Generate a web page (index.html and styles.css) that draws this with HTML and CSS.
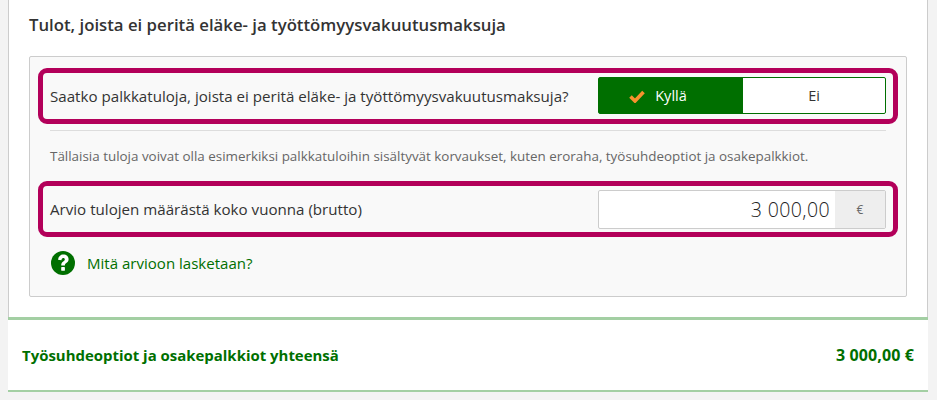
FILE: index.html
```html
<!DOCTYPE html>
<html lang="fi">
<head>
    <meta charset="UTF-8">
    <meta name="viewport" content="width=device-width, initial-scale=1.0">
    <title>Työsuhdeoptiot ja osakepalkkiot</title>
    <link rel="stylesheet" href="styles.css">
</head>
<body>
    <div class="panel">
        <h2 class="panel-title">Tulot, joista ei peritä eläke- ja työttömyysvakuutusmaksuja</h2>

        <div class="question-box">
            <div class="highlight-row">
                <span class="row-label">Saatko palkkatuloja, joista ei peritä eläke- ja työttömyysvakuutusmaksuja?</span>
                <div class="toggle">
                    <button class="toggle-btn active">
                        <svg class="check-icon" viewBox="0 0 16 13" width="16" height="13">
                            <path d="M1.5 6.5 L6 11 L14.5 2" fill="none" stroke="#f7922e" stroke-width="3.6"/>
                        </svg>Kyllä
                    </button>
                    <button class="toggle-btn">Ei</button>
                </div>
            </div>

            <hr class="divider">
            <p class="help-text">Tällaisia tuloja voivat olla esimerkiksi palkkatuloihin sisältyvät korvaukset, kuten eroraha, työsuhdeoptiot ja osakepalkkiot.</p>

            <div class="highlight-row">
                <span class="row-label">Arvio tulojen määrästä koko vuonna (brutto)</span>
                <div class="amount-input">
                    <span class="amount-value">3 000,00</span>
                    <span class="amount-unit">€</span>
                </div>
            </div>

            <a href="#" class="help-link">
                <svg class="help-icon" viewBox="0 0 24 24" width="24" height="24">
                    <circle cx="12" cy="12" r="12" fill="#006f00"/>
                    <path d="M7 8.8 C7.4 5.6 9.4 3.6 12.4 3.6 C15.4 3.6 17.6 5.6 17.6 8.3 C17.6 10.4 16.4 11.4 15 12.3 C14.1 12.9 13.9 13.3 13.9 14.6 L10.2 14.6 C10.2 12.5 10.7 11.4 12.2 10.4 C13.3 9.7 13.8 9.3 13.8 8.5 C13.8 7.7 13.2 7.1 12.3 7.1 C11.3 7.1 10.7 7.8 10.4 9.2 Z" fill="#fff"/>
                    <rect x="10.2" y="16" width="3.7" height="3.7" rx="0.4" fill="#fff"/>
                </svg>
                Mitä arvioon lasketaan?
            </a>
        </div>
    </div>

    <div class="total-row">
        <span>Työsuhdeoptiot ja osakepalkkiot yhteensä</span>
        <span class="total-value">3 000,00 €</span>
    </div>
</body>
</html>
```

FILE: styles.css
```css
body {
    font-family: 'Open Sans', 'Noto Sans', sans-serif;
    margin: 0;
    padding: 0 9px 8px 8px;
    background-color: #f3f3f3;
    color: #333;
    font-size: 14px;
}
.panel {
    background-color: white;
    border-left: 1px solid #ccc;
    border-right: 1px solid #ccc;
    padding: 13px 20px 20px 20px;
}
.panel-title {
    font-size: 16.75px;
    font-weight: 600;
    line-height: 24px;
    margin: 0 0 19px 0;
    color: #333;
}
.question-box {
    background-color: #f9f9f9;
    border: 1px solid #ccc;
    border-radius: 2px;
    padding: 11px 8px 21px 8px;
}
.highlight-row {
    display: flex;
    justify-content: space-between;
    align-items: center;
    height: 56px;
    box-sizing: border-box;
    border: 5px solid #b3005a;
    border-radius: 9px;
    padding: 0 7px;
}
.row-label {
    font-size: 15.13px;
}
.toggle {
    display: flex;
    width: 288px;
    height: 37px;
    box-sizing: border-box;
    margin-bottom: 1px;
    border: 1px solid #006f00;
    border-radius: 2px;
    background-color: white;
}
.toggle-btn {
    flex: 1;
    background: none;
    border: none;
    padding: 0;
    font-family: inherit;
    font-size: 14.5px;
    color: #333;
}
.toggle-btn.active {
    flex: 0 0 144px;
    background-color: #006f00;
    color: white;
}
.check-icon {
    margin-left: -26px;
    margin-right: 10px;
    vertical-align: -2px;
}
.divider {
    border: none;
    border-top: 1px solid #ddd;
    margin: 6px 12px 0 12px;
}
.help-text {
    font-size: 13.42px;
    line-height: 18px;
    color: #666;
    margin: 16px 12px 16px 12px;
}
.amount-input {
    display: flex;
    width: 288px;
    height: 39px;
    box-sizing: border-box;
    border: 1px solid #ccc;
    border-radius: 2px;
    background-color: white;
}
.amount-value {
    flex: 1;
    text-align: right;
    font-size: 19.5px;
    font-weight: 300;
    letter-spacing: 0.4px;
    line-height: 37px;
    padding-right: 5px;
    color: #222;
}
.amount-unit {
    width: 50px;
    text-align: center;
    font-size: 12px;
    line-height: 37px;
    color: #666;
    background-color: #eee;
}
.help-link {
    display: flex;
    align-items: center;
    gap: 12px;
    margin: 14px 0 0 13px;
    color: #006f00;
    text-decoration: none;
    font-size: 15.05px;
}
.total-row {
    display: flex;
    justify-content: space-between;
    align-items: center;
    height: 75px;
    box-sizing: border-box;
    background-color: white;
    border-top: 3px solid #a3cfa3;
    border-bottom: 2px solid #a3cfa3;
    padding: 0 14px;
    font-weight: 700;
    font-size: 14.94px;
    color: #006f00;
}
.total-value {
    font-size: 16px;
    letter-spacing: 0.1px;
}
```
